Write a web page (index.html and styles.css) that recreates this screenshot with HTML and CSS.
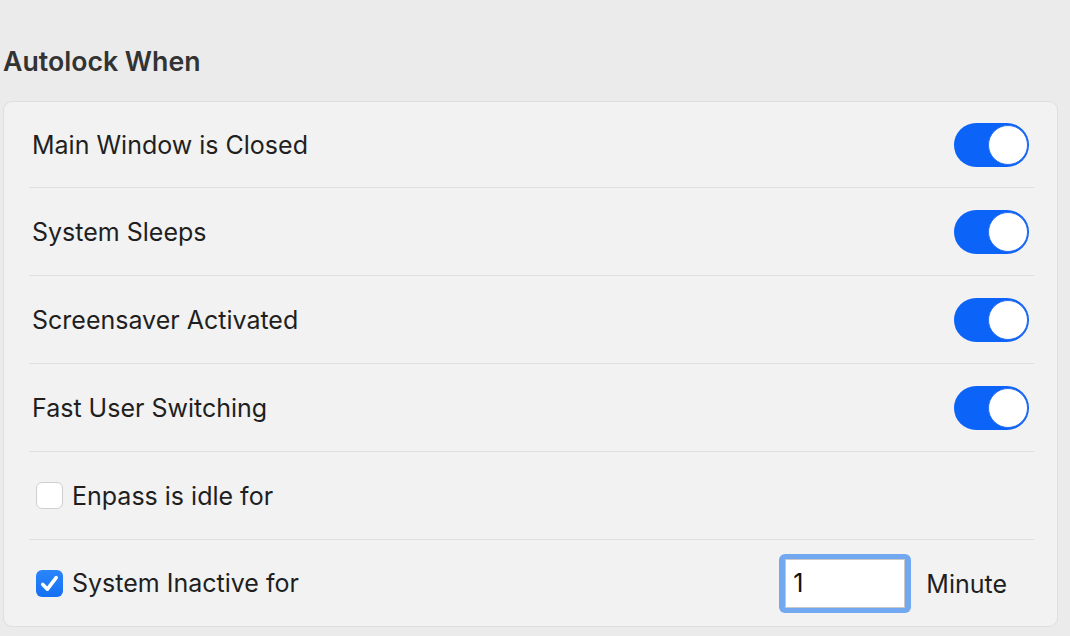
FILE: index.html
```html
<!DOCTYPE html>
<html>
<head>
<meta charset="utf-8">
<link rel="stylesheet" href="styles.css">
</head>
<body>
<h2 class="title">Autolock When</h2>
<div class="card">
  <div class="row">
    <span class="label">Main Window is Closed</span>
    <span class="toggle on"><span class="knob"></span></span>
  </div>
  <div class="row">
    <span class="label">System Sleeps</span>
    <span class="toggle on"><span class="knob"></span></span>
  </div>
  <div class="row">
    <span class="label">Screensaver Activated</span>
    <span class="toggle on"><span class="knob"></span></span>
  </div>
  <div class="row">
    <span class="label">Fast User Switching</span>
    <span class="toggle on"><span class="knob"></span></span>
  </div>
  <div class="row">
    <span class="check-label"><span class="checkbox"></span><span class="label">Enpass is idle for</span></span>
  </div>
  <div class="row last">
    <span class="check-label"><span class="checkbox checked"><svg viewBox="0 0 27 27" width="27" height="27"><path d="M6.8 14.4 L11.4 19.2 L20.2 7.6" fill="none" stroke="#fff" stroke-width="3.6" stroke-linecap="round" stroke-linejoin="round"/></svg></span><span class="label">System Inactive for</span></span>
    <span class="duration"><span class="field"><span class="field-inner">1</span></span><span class="label unit">Minute</span></span>
  </div>
</div>
</body>
</html>
```
FILE: styles.css
```css
html, body {
  margin: 0;
  padding: 0;
  background: #ebebeb;
  font-family: Inter, "Noto Sans", sans-serif;
  color: #1f1f1f;
}
body {
  width: 1070px;
  height: 636px;
  overflow: hidden;
}
.title {
  margin: 0;
  padding: 46px 0 0 3px;
  height: 101px;
  box-sizing: border-box;
  font-size: 26.7px;
  font-weight: 600;
  color: #333;
  line-height: 30px;
}
.card {
  margin-left: 3px;
  width: 1055px;
  height: 526px;
  box-sizing: border-box;
  background: #f2f2f2;
  border: 1px solid #dedede;
  border-radius: 9px;
  padding: 0 23px 0 25px;
}
.row {
  height: 88px;
  box-sizing: border-box;
  border-bottom: 1px solid #e0e0e0;
  display: flex;
  align-items: center;
  justify-content: space-between;
  padding: 0 5px 0 3px;
}
.row:first-child {
  height: 86px;
}
.row.last {
  border-bottom: none;
  height: 86px;
}
.label {
  font-size: 25px;
  letter-spacing: 0;
  color: #1f1f1f;
}
.toggle {
  width: 75px;
  height: 44px;
  border-radius: 22px;
  background: #0c63f7;
  display: flex;
  align-items: center;
  justify-content: flex-end;
  padding: 0 1px;
  box-sizing: border-box;
}
.knob {
  width: 40px;
  height: 40px;
  border-radius: 50%;
  background: #fff;
  box-sizing: border-box;
  border: 1px solid #2a6ff0;
}
.check-label {
  display: flex;
  align-items: center;
  gap: 9px;
  margin-left: 4px;
}
.checkbox {
  width: 27px;
  height: 27px;
  box-sizing: border-box;
  border-radius: 6px;
  background: #fff;
  border: 1px solid #cfcfcf;
  display: block;
}
.checkbox svg {
  display: block;
}
.checkbox.checked {
  border: none;
  background: linear-gradient(#2a86fc, #1470f2);
}
.duration {
  display: flex;
  align-items: center;
  gap: 15px;
  margin-right: 22px;
}
.field {
  width: 132px;
  height: 59px;
  box-sizing: border-box;
  border-radius: 6px;
  background: #72a8f0;
  padding: 5px 6px 5px 6px;
  display: block;
}
.field-inner {
  display: flex;
  align-items: center;
  height: 100%;
  background: #fff;
  border: 1px solid #c8c8c8;
  box-sizing: border-box;
  padding-left: 7px;
  font-size: 25px;
  color: #111;
}
.unit {
  margin-top: 1px;
}
```
